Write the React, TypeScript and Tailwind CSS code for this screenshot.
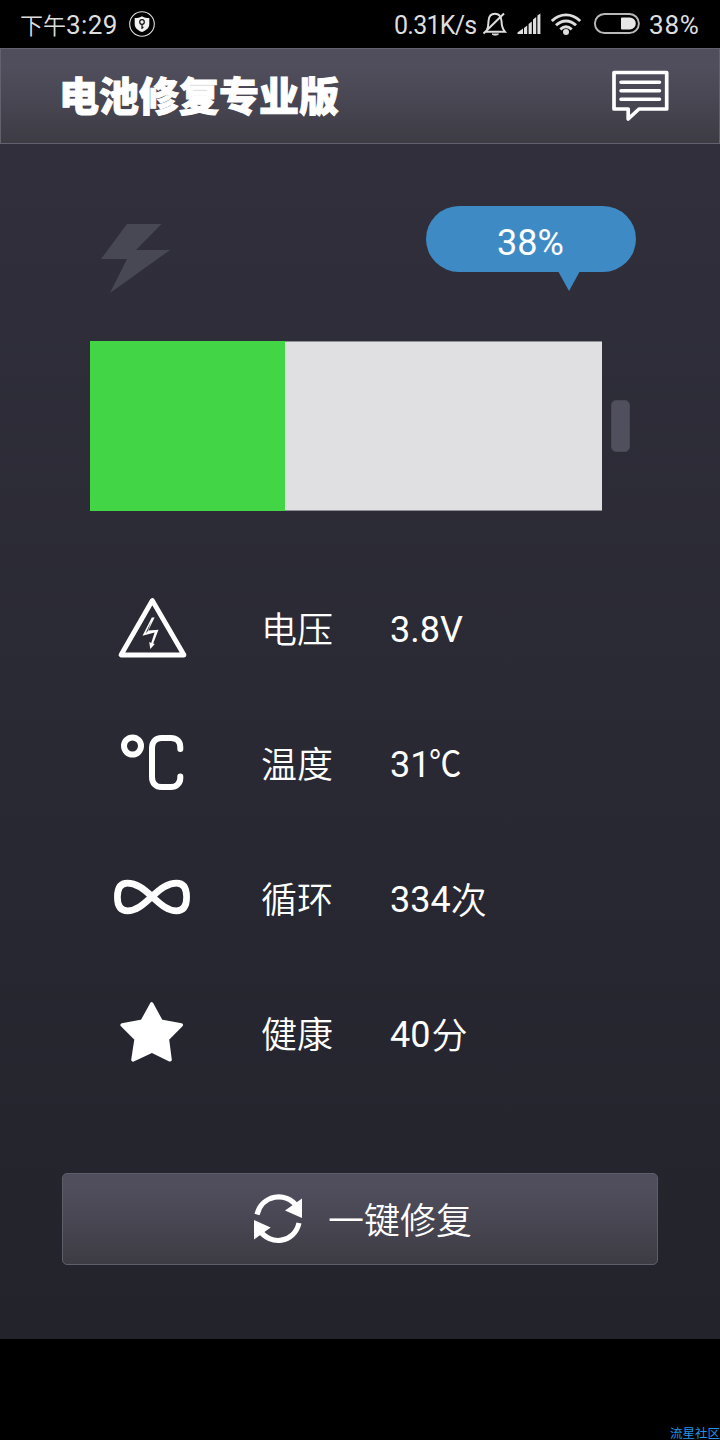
import type { ReactNode } from "react";

const roboto = "font-[Roboto,'Noto_Sans_CJK_SC',sans-serif]";

function StatusBar() {
  return (
    <div className="flex h-12 items-center bg-black pl-5 text-[26px] leading-[48px] text-[#dedede]">
      <span className="w-[109px] whitespace-nowrap pt-[3px]">
        <span className="text-[23px] font-[350]">下午</span>
        <span className="tracking-[0.4px]">3:29</span>
      </span>
      <svg viewBox="129 11 26 26" className="h-[26px] w-[26px]">
        <circle cx="142" cy="24" r="12.3" fill="none" stroke="#dedede" strokeWidth="1.1" />
        <path d="M142 16.3C139.5 17.8 137 18 134.700 18V24C134.700 28 138 30.500 142 32C146 30.500 149.300 28 149.300 24V18C147 18 144.500 17.800 142 16.300Z" fill="#f2f2f2" />
        <circle cx="142" cy="22" r="2.300" fill="none" stroke="#111" strokeWidth="1.200" />
        <path d="M142 24.500V29M142 27.300H143.500" stroke="#111" strokeWidth="1.200" />
      </svg>
      <span className="ml-[239px] w-[88px] whitespace-nowrap pt-[3px] text-[25px] tracking-[-0.75px]">0.31K/s</span>
      <svg viewBox="482 10 26 28" className="h-7 w-[26px]" fill="none" stroke="#dedede" strokeWidth="2">
        <path d="M487 29.500C488.500 27 488.300 24 488.500 21C488.800 16 491.500 13.800 495 13.800S501 16 501.500 21C501.700 25 501.600 28 505 31.800H486" />
        <path d="M504 13.500L483.500 33.500" />
        <path d="M492 34H498.500C497.500 35.500 493 35.500 492 34Z" fill="#dedede" strokeWidth="1" />
      </svg>
      <svg viewBox="516 12 26 24" className="ml-2 h-6 w-[26px]" fill="#dedede">
        <path d="M517.500 34V32.500L523 28.500V34ZM524 28L527.200 25.500V34H524ZM528.600 24L531.800 21.500V34H528.600ZM533 19.500L536.200 17V34H533ZM537.400 15.500L540.400 13.500V34H537.400Z" />
      </svg>
      <svg viewBox="550 12 32 24" className="ml-2 h-6 w-8" fill="none" stroke="#dedede" strokeWidth="2.900">
        <path d="M551.800 21C560 12.800 572 12.800 580.200 21" />
        <path d="M556 25.300C562 19.500 570 19.500 576 25.300" />
        <path d="M560.300 29.300C564 26 568 26 571.700 29.300" />
        <circle cx="566" cy="32" r="3" fill="#dedede" stroke="none" />
      </svg>
      <svg viewBox="593 12 48 24" className="ml-[11px] h-6 w-12">
        <rect x="594.900" y="14" width="44" height="19" rx="9.500" fill="none" stroke="#b9b9b9" strokeWidth="1.900" />
        <path d="M622 17.500H629.800A6 6 0 0 1 629.800 29.500H622Q621 29.500 621 28.500V18.500Q621 17.500 622 17.500Z" fill="#e6e6e6" />
      </svg>
      <span className="ml-2 whitespace-nowrap pt-px tracking-[0.8px]">38%</span>
    </div>
  );
}

function Header() {
  return (
    <header className="flex h-24 items-center justify-between border border-[#62616e] bg-linear-to-b from-[#504e5c] from-20% to-[#3d3c45] pl-[58px] pr-[49px]">
      <h1 className="pt-[3px] text-[40px] font-black leading-[48px] text-white [-webkit-text-stroke:1px_white]">电池修复专业版</h1>
      <svg viewBox="611 70 59 52" className="h-[52px] w-[59px]" fill="none" stroke="#fff">
        <path d="M614 72.500H666.700V109H639L628.200 119V109H614Z" strokeWidth="3.700" strokeLinejoin="round" />
        <path d="M621 82.200H659.500M621 90.800H659.500M621 99.300H659.500" strokeWidth="3.600" strokeLinecap="round" />
      </svg>
    </header>
  );
}

function Charge({ percent }: { percent: number }) {
  return (
    <section className="px-[90px]">
      <div className="flex h-[197px] justify-between pl-[11px] pt-[61px]">
        <svg viewBox="101 223 70 71" className="mt-[18px] h-[71px] w-[70px]">
          <path d="M127 224H161.500L136 250H170L110 293L127 259H101Z" fill="#484754" />
        </svg>
        <div className="relative -mr-[5.5px] mt-[0.5px] h-[66px] w-[210px] rounded-full bg-[#3e8ac5] pt-[3px] text-center text-[36px] leading-[68px] text-white">
          {percent}%
          <svg viewBox="0 0 22 20" className="absolute left-[132.5px] top-[65.5px] h-5 w-[22px]">
            <path d="M0 0H22L11 20Z" fill="#3e8ac5" />
          </svg>
        </div>
      </div>
      <div className="flex items-center gap-[9px]">
        <div className="h-[170px] w-[512px] shrink-0 border-y border-[#8f8f97] bg-[#e0e0e2]">
          <div className="-mt-px h-[170px] bg-[#42d545]" style={{ width: `${percent}%` }} />
        </div>
        <div className="h-[52px] w-[19px] shrink-0 rounded-[5px] border border-[#484754] bg-[#504f5d]" />
      </div>
    </section>
  );
}

const icons: Record<string, ReactNode> = {
  voltage: (
    <>
      <path d="M152.300 600.500L121 655H184Z" fill="none" stroke="#fff" strokeWidth="4.800" strokeLinejoin="round" />
      <path d="M151.800 617.500H154.600L148.300 630.500L158.500 629.800L153.200 643.500L154.800 644L150.300 649L149.200 642L151.200 643L154.600 632.500L142.500 635.800Z" fill="#fff" />
      <path d="M151.500 621L145.500 633.500L147.800 631Z" fill="#2a2933" />
    </>
  ),
  temperature: (
    <g fill="none" stroke="#fff">
      <circle cx="132.500" cy="746" r="8.500" strokeWidth="6" />
      <path d="M180.300 749V747C180.300 741 176 737.900 171 737.900H161.500C155.500 737.900 152 742 152 748V777C152 783.500 156 787.100 161.500 787.100H171C176 787.100 180.300 783.500 180.300 778V776.500" strokeWidth="6" strokeLinecap="round" />
    </g>
  ),
  cycle: (
    <path d="M152 896.500C143 888 136 883.200 127.500 883.200C120 883.200 117.400 888.500 117.400 897S120 910.800 127.500 910.800C136 910.800 143 905 152 896.500C161 888 168 883.200 176.500 883.200C184 883.200 186.600 888.500 186.600 897S184 910.800 176.500 910.800C168 910.800 161 905 152 896.500Z" fill="none" stroke="#fff" strokeWidth="6.700" />
  ),
  health: (
    <path d="M151.700 1004L161 1021.200L181.200 1025L167.300 1039L170 1059.800L151.700 1051L133 1059.800L136.200 1039L122.200 1025L142.300 1021.200Z" fill="#fff" stroke="#fff" strokeWidth="3.600" strokeLinejoin="round" />
  ),
};

const rows = [
  { id: "voltage", box: "110 589 84 80", label: "电压", value: "3.8V", unit: "", unitClass: "" },
  { id: "temperature", box: "110 724 84 80", label: "温度", value: "31", unit: "℃", unitClass: "-ml-px inline-block origin-left scale-x-[0.9]" },
  { id: "cycle", box: "110 859 84 80", label: "循环", value: "334", unit: "次", unitClass: "-mb-0.5 pt-0.5 font-[350]" },
  { id: "health", box: "110 994 84 80", label: "健康", value: "40", unit: "分", unitClass: "-mb-0.5 ml-px pt-0.5 font-[350]" },
];

function Stats() {
  return (
    <section className="pl-[110px] pt-[50px] text-white">
      {rows.map((row) => (
        <div key={row.id} className="flex h-[135px] items-center">
          <svg viewBox={row.box} className="h-20 w-[84px]">{icons[row.id]}</svg>
          <span className="ml-[67px] w-[129px] pt-1 text-[36px] font-[350] leading-[48px]">{row.label}</span>
          <span className="flex pt-[3px] text-[36px] leading-[48px]">
            {row.value}
            {row.unit && <span className={row.unitClass}>{row.unit}</span>}
          </span>
        </div>
      ))}
    </section>
  );
}

function RepairButton() {
  return (
    <button className="mx-[62px] mt-[72px] flex h-[92px] w-[596px] items-center justify-center gap-[25px] rounded-[5px] border border-[#5e5d6a] bg-linear-to-b from-[#504e5d] from-15% to-[#3d3c44] pl-[5px] text-white">
      <svg viewBox="253 1194 50 50" className="h-[50px] w-[50px]">
        <path d="M257 1214.500C262 1194.500 286 1191 297 1206.500M299 1223C294.500 1243 270 1246.500 259.500 1230" fill="none" stroke="#fff" strokeWidth="5.200" />
        <path d="M302 1198.500V1218L285 1210.500ZM254 1220V1239.500L270.700 1227.500Z" fill="#fff" />
      </svg>
      <span className="pt-[5px] text-[36px] font-[350] leading-[48px]">一键修复</span>
    </button>
  );
}

export default function App() {
  return (
    <div className={`flex h-[1440px] w-[720px] flex-col bg-black ${roboto}`}>
      <StatusBar />
      <Header />
      <main className="h-[1195px] bg-linear-to-b from-[#302f3b] to-[#23232c]">
        <Charge percent={38} />
        <Stats />
        <RepairButton />
      </main>
      <footer className="flex h-[101px] items-end justify-end">
        <span className="whitespace-nowrap text-[12.500px] leading-[12px] text-[#2394e8]">流星社区</span>
      </footer>
    </div>
  );
}
